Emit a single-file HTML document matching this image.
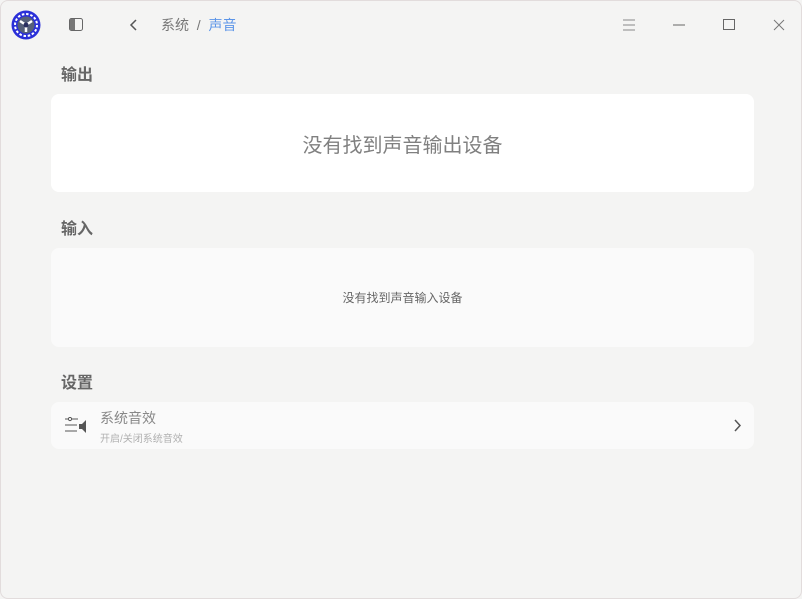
<!DOCTYPE html>
<html><head><meta charset="utf-8"><style>
*{margin:0;padding:0;box-sizing:border-box}
body{width:802px;height:599px;background:#f4f4f3;font-family:"Liberation Sans","Noto Sans CJK SC",sans-serif;position:relative;overflow:hidden;box-shadow:inset 0 0 0 1px #e2dcdc;border-radius:8px}
.abs{position:absolute}
.h{font-size:16px;font-weight:bold;color:#666;left:61px}
.card{position:absolute;left:51px;width:703px;background:#fff;border-radius:8px}
</style></head><body>
<svg class="abs" style="left:11px;top:10px" width="30" height="30" viewBox="0 0 30 30">
<circle cx="15" cy="15" r="14.5" fill="#2a2fd8"/>
<circle cx="15" cy="15" r="11" fill="none" stroke="#fff" stroke-width="2" stroke-dasharray="2.5 1.8"/>
<circle cx="15" cy="15" r="8.5" fill="#56607a"/>
<path d="M15 15 L15 22 M15 15 L9 11 M15 15 L21 11" stroke="#fff" stroke-width="2.5"/>
<circle cx="15" cy="15" r="2.5" fill="#2a2f60"/>
</svg>
<svg class="abs" style="left:69px;top:18px" width="14" height="13"><rect x="0.5" y="0.5" width="13" height="12" rx="2" fill="none" stroke="#666"/><rect x="1" y="1" width="5" height="11" fill="#777"/></svg>
<svg class="abs" style="left:129px;top:18px" width="10" height="14"><path d="M7 2 L2 7 L7 12" fill="none" stroke="#555" stroke-width="1.5"/></svg>
<div class="abs" style="left:161px;top:15px;font-size:14px;color:#777">系统 &nbsp;/&nbsp; <span style="color:#5c95e8">声音</span></div>
<svg class="abs" style="left:622px;top:18px" width="14" height="14"><path d="M1 2H13M1 7H13M1 12H13" stroke="#888" stroke-width="1"/></svg>
<svg class="abs" style="left:672px;top:18px" width="14" height="14"><path d="M1 7H13" stroke="#666"/></svg>
<svg class="abs" style="left:722px;top:18px" width="14" height="14"><rect x="1.5" y="1.5" width="11" height="10" fill="none" stroke="#666"/></svg>
<svg class="abs" style="left:772px;top:18px" width="14" height="14"><path d="M2 2L12 12M12 2L2 12" stroke="#777"/></svg>
<div class="abs h" style="top:61px">输出</div>
<div class="card" style="top:94px;height:98px;display:flex;align-items:center;justify-content:center;font-size:20px;color:#808080">没有找到声音输出设备</div>
<div class="abs h" style="top:215px">输入</div>
<div class="card" style="top:248px;height:99px;background:#fafafa;display:flex;align-items:center;justify-content:center;font-size:12px;color:#666">没有找到声音输入设备</div>
<div class="abs h" style="top:369px">设置</div>
<div class="card" style="top:402px;height:47px;background:#fafafa">
<svg class="abs" style="left:14px;top:15px" width="22" height="18"><circle cx="5" cy="2" r="1.6" fill="none" stroke="#555"/><path d="M0 2H3M7 2H13M0 8H12M0 14H12" stroke="#555"/><path d="M14 7L17 7L21 3V16L17 12H14Z" fill="#555"/></svg>
<div class="abs" style="left:49px;top:6px;font-size:14px;color:#888">系统音效</div>
<div class="abs" style="left:49px;top:28px;font-size:10px;color:#b0b0b0">开启/关闭系统音效</div>
<svg class="abs" style="left:682px;top:17px" width="8" height="13"><path d="M2 1L7 6.5L2 12" fill="none" stroke="#555" stroke-width="1.5"/></svg>
</div>
</body></html>
